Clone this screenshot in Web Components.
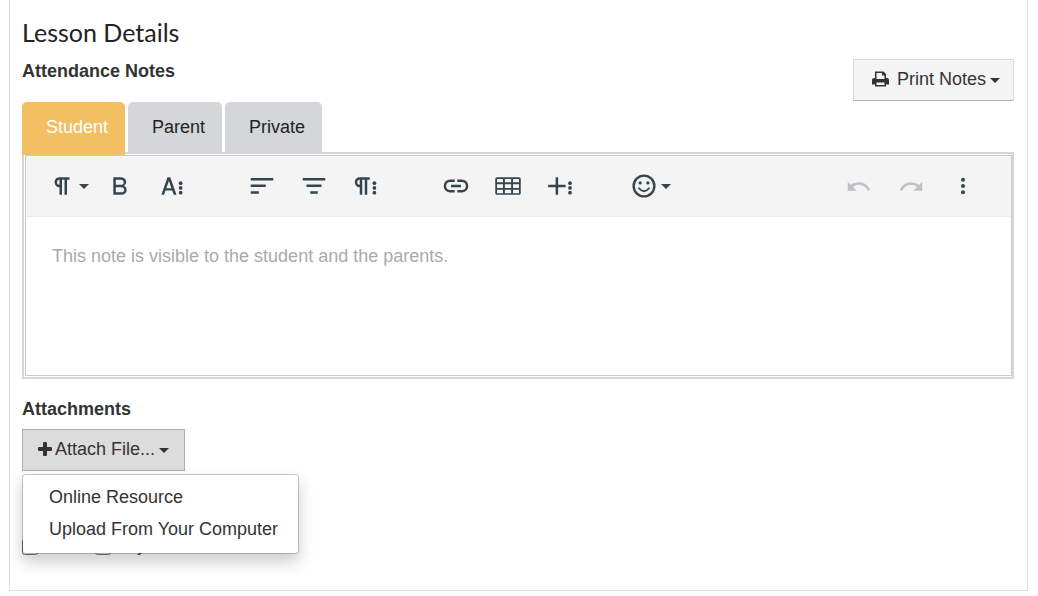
<!DOCTYPE html>
<html lang="en">
<head>
<meta charset="utf-8">
<title>Lesson Details</title>
<style>
  body { margin: 0 10px 0 9px; background: #fff; color: #333; font: 18px/24px "Liberation Sans", Arial, sans-serif; }
</style>
</head>
<body>
<lesson-card>
  <span slot="title">Lesson Details</span>
  <section-header>
    Attendance Notes
    <drop-button slot="action" look="light" icon="print">Print Notes</drop-button>
  </section-header>
  <note-tabs>
    <note-tab active>Student</note-tab>
    <note-tab>Parent</note-tab>
    <note-tab>Private</note-tab>
  </note-tabs>
  <note-editor placeholder="This note is visible to the student and the parents."></note-editor>
  <file-attachments></file-attachments>
</lesson-card>

<script>
const svg = (w, h, box, body) => `<svg width="${w}" height="${h}" viewBox="${box}" fill="currentColor" aria-hidden="true">${body}</svg>`;
const dots = x => [9.7, 13.5, 17.3].map(y => `<circle cx="${x}" cy="${y}" r="1.5"/>`).join('');
const icon = body => svg(30, 30, '0 0 24 24', body);
const PILCROW = 'M10.15,5A4.11,4.11,0,0,0,6.08,8.18,4,4,0,0,0,10,13v6h2V7h2V19h2V7h2V5ZM8,9a2,2,0,0,1,2-2v4A2,2,0,0,1,8,9Z';
const ICONS = {
  pilcrow: icon(`<path d="${PILCROW}"/>`),
  bold: icon('<path d="M15.25,11.8h0A3.68,3.68,0,0,0,17,9a3.93,3.93,0,0,0-3.86-4H6.65V19h7a3.74,3.74,0,0,0,3.7-3.78V15.1A3.64,3.64,0,0,0,15.25,11.8ZM8.65,7h4.2a2.09,2.09,0,0,1,2,1.3,2.09,2.09,0,0,1-1.37,2.61,2.23,2.23,0,0,1-.63.09H8.65Zm4.6,10H8.65V13h4.6a2.09,2.09,0,0,1,2,1.3,2.09,2.09,0,0,1-1.37,2.61A2.23,2.23,0,0,1,13.25,17Z"/>'),
  moreText: icon(`<path fill-rule="evenodd" d="M8.4,5h2.2l5,14h-2.2l-1.2-3.4H6.8L5.6,19H3.5ZM7.5,13.7h4L9.5,7.9Z"/>${dots(18.9)}`),
  left: icon('<path d="M3,5.5h18v2H3ZM3,10.8h12v2H3ZM3,16.2h6.500v2H3Z"/>'),
  center: icon('<path d="M3,5.5h18v2H3ZM6,10.800h12v2H6ZM9,16.2h6v2H9Z"/>'),
  moreParagraph: icon(`<path transform="translate(-3)" d="${PILCROW}"/>${dots(18.7)}`),
  link: icon('<path d="M11,6.700H7.400a5.200,5.200,0,0,0,0,10.500H11v-2H7.400a3.200,3.200,0,0,1,0-6.500H11ZM13,6.700h3.600a5.200,5.200,0,0,1,0,10.500H13v-2h3.600a3.200,3.200,0,0,0,0-6.500H13ZM8,11h8v2H8Z"/>'),
  table: icon('<path fill-rule="evenodd" d="M3.300,5h17.400a1.500,1.500,0,0,1,1.500,1.500v11a1.500,1.500,0,0,1-1.500,1.500H3.300a1.500,1.500,0,0,1-1.500-1.500v-11A1.500,1.500,0,0,1,3.300,5ZM3.200,6.300v2.700h4.800V6.300ZM9.500,6.300v2.700h5V6.300ZM16,6.300v2.700h4.800V6.300ZM3.200,10.500v3h4.800v-3ZM9.500,10.500v3h5v-3ZM16,10.500v3h4.800v-3ZM3.200,15v2.700h4.800V15ZM9.500,15v2.700h5V15ZM16,15v2.700h4.800V15Z"/>'),
  plus: icon(`<path d="M8.500,5h2v6h6v2h-6v6h-2v-6h-6v-2h6Z"/>${dots(20)}`),
  smile: icon('<circle cx="12" cy="12" r="8.300" fill="none" stroke="currentColor" stroke-width="1.900"/><circle cx="8.900" cy="9.500" r="1.300"/><circle cx="15.100" cy="9.500" r="1.300"/><path d="M8,13.800q4,4.800,8,0" fill="none" stroke="currentColor" stroke-width="1.500" stroke-linecap="round"/>'),
  undo: icon('<path d="M3,8.600l2.600,2.600C10,7.800,17.500,7.800,21,15l-1.900.9C16.500,10.700,10.800,9.700,7.300,12.900L10,15.700H3Z"/>'),
  redo: icon('<path d="M21,8.600l-2.600,2.600C14,7.800,6.500,7.800,3,15l1.900.9C7.500,10.700,13.200,9.700,16.700,12.900L14,15.700h7Z"/>'),
  more: icon('<circle cx="12" cy="7" r="1.600"/><circle cx="12" cy="12" r="1.600"/><circle cx="12" cy="17" r="1.600"/>'),
  print: svg(17, 16, '0 0 17 16', '<path fill-rule="evenodd" d="M3,0.500h8.500L14,3v4h1a2,2,0,0,1,2,2v4.500h-3V15.500H3V13.500H0V9A2,2,0,0,1,2,7H3ZM4.500,2v6h8V4.500H10V2ZM4.500,11.500V14h8V11.500Z"/>'),
  add: svg(14, 14, '0 0 14 14', '<path d="M6,0h2q1,0,1,1v4h4q1,0,1,1v2q0,1-1,1H9v4q0,1-1,1H6q-1,0-1-1V9H1Q0,9,0,8V6Q0,5,1,5h4V1Q5,0,6,0Z"/>'),
  caret: svg(10, 5, '0 0 10 5', '<path d="M0,0h10L5,5Z"/>')
};

function define(name, render) {
  customElements.define(name, class extends HTMLElement {
    constructor() {
      super();
      this.attachShadow({ mode: 'open' });
    }
    connectedCallback() {
      const template = document.createElement('template');
      template.innerHTML = render(this);
      this.shadowRoot.replaceChildren(template.content.cloneNode(true));
    }
  });
}

define('lesson-card', () => `
  <style>
    :host { display: block; padding: 20px 13px 35px 12px; border: 1px solid #ddd; border-top: 0; box-shadow: 0 1px 4px rgba(0,0,0,.08); }
    h2 { margin: 0 0 15px; font: 400 25px/24px Lato, sans-serif; color: #222; }
  </style>
  <h2><slot name="title"></slot></h2>
  <slot></slot>`);

define('section-header', () => `
  <style>
    :host { display: flex; justify-content: space-between; align-items: flex-start; margin-bottom: 1px; }
    h3 { margin: 0; font: inherit; font-weight: 700; }
  </style>
  <h3><slot></slot></h3><slot name="action"></slot>`);

define('drop-button', el => `
  <style>
    :host { display: inline-block; vertical-align: top; }
    button { display: flex; align-items: center; height: 42px; padding: 0 15px 2px; border: 1px solid #adadad; background: #dcdcdc; color: #333; font: inherit; }
    .text { margin: 0 4px 0 3px; white-space: nowrap; }
    svg { flex: none; }
    svg:last-child { margin-top: 2px; }
    :host([look="light"]) button { padding: 0 13px 2px 18px; border-color: #d8d8d8 #d8d8d8 #b3b3b3; background: #f4f4f4; }
    :host([look="light"]) .text { margin-left: 8px; }
  </style>
  <button type="button" aria-haspopup="menu">${ICONS[el.getAttribute('icon')]}<span class="text"><slot></slot></span>${ICONS.caret}</button>`);

define('note-tabs', () => `
  <style>:host { display: flex; align-items: flex-start; gap: 3px; height: 50px; }</style>
  <slot></slot>`);

define('note-tab', () => `
  <style>
    :host { display: block; }
    button { display: block; height: 50px; padding: 0 17px 0 24px; border: 0; border-radius: 5px 5px 0 0; background: #d3d7da; color: #222; font: inherit; }
    :host([active]) { position: relative; z-index: 1; }
    :host([active]) button { height: 53px; padding-bottom: 3px; background: #f2bf62; color: #fff; }
  </style>
  <button type="button"><slot></slot></button>`);

define('tool-button', el => `
  <style>
    :host { display: block; }
    button { display: flex; align-items: center; justify-content: center; gap: 2px; width: 52px; height: 60px; padding: 0; border: 0; background: none; color: #36454d; }
    button:disabled { color: #bfc2c4; }
  </style>
  <button type="button" aria-label="${el.getAttribute('label')}"${el.hasAttribute('disabled') ? ' disabled' : ''}>${ICONS[el.getAttribute('icon')]}${el.hasAttribute('drop') ? ICONS.caret : ''}</button>`);

define('note-editor', el => `
  <style>
    :host { display: block; padding: 1px 0 1px 1px; border: 2px solid #d3d7db; }
    .box { border: 1px solid #c8cacc; }
    .bar { display: flex; gap: 38px; height: 60px; padding: 0 22px 0 16px; border-bottom: 1px solid #eee; background: #f4f4f4; }
    .group { display: flex; }
    .end { margin-left: auto; }
    textarea { display: block; box-sizing: border-box; width: 100%; height: 158px; padding: 25px 26px; border: 0; outline: 0; resize: none; background: #fff; color: #333; font: inherit; line-height: 28px; }
    textarea::placeholder { color: #aaa; opacity: 1; }
  </style>
  <div class="box">
    <div class="bar" role="toolbar" aria-label="Formatting">
      <div class="group">
        <tool-button icon="pilcrow" label="Paragraph format" drop></tool-button>
        <tool-button icon="bold" label="Bold"></tool-button>
        <tool-button icon="moreText" label="More text"></tool-button>
      </div>
      <div class="group">
        <tool-button icon="left" label="Align left"></tool-button>
        <tool-button icon="center" label="Align center"></tool-button>
        <tool-button icon="moreParagraph" label="More paragraph"></tool-button>
      </div>
      <div class="group">
        <tool-button icon="link" label="Insert link"></tool-button>
        <tool-button icon="table" label="Insert table"></tool-button>
        <tool-button icon="plus" label="More rich"></tool-button>
      </div>
      <div class="group">
        <tool-button icon="smile" label="Emoticons" drop></tool-button>
      </div>
      <div class="group end">
        <tool-button icon="undo" label="Undo" disabled></tool-button>
        <tool-button icon="redo" label="Redo" disabled></tool-button>
        <tool-button icon="more" label="More"></tool-button>
      </div>
    </div>
    <textarea aria-label="Note" placeholder="${el.getAttribute('placeholder')}"></textarea>
  </div>`);

define('pop-menu', () => `
  <style>
    :host { display: block; padding: 6px 0 8px; border: 1px solid rgba(0,0,0,.2); border-radius: 4px; background: #fff; background-clip: padding-box; box-shadow: 0 8px 16px rgba(0,0,0,.2); }
    ::slotted(a) { display: block; padding: 4px 20px 4px 26px; color: #333; text-decoration: none; white-space: nowrap; }
  </style>
  <slot></slot>`);

define('check-option', () => `
  <style>
    :host { display: block; }
    label { display: flex; align-items: flex-end; gap: 4px; line-height: 20px; }
    input { width: 16px; height: 16px; margin: 0; }
  </style>
  <label><input type="checkbox"><slot></slot></label>`);

define('file-attachments', () => `
  <style>
    :host { display: block; margin-top: 18px; }
    h3 { margin: 0 0 8px; font: inherit; font-weight: 700; }
    .picker { position: relative; width: max-content; margin-bottom: 64px; }
    pop-menu { position: absolute; z-index: 2; top: 100%; left: 0; margin-top: 3px; }
    .options { display: flex; gap: 8px; }
  </style>
  <h3>Attachments</h3>
  <div class="picker">
    <drop-button icon="add">Attach File...</drop-button>
    <pop-menu>
      <a href="#online">Online Resource</a>
      <a href="#upload">Upload From Your Computer</a>
    </pop-menu>
  </div>
  <div class="options">
    <check-option>Email</check-option>
    <check-option>Any</check-option>
  </div>`);
</script>
</body>
</html>
